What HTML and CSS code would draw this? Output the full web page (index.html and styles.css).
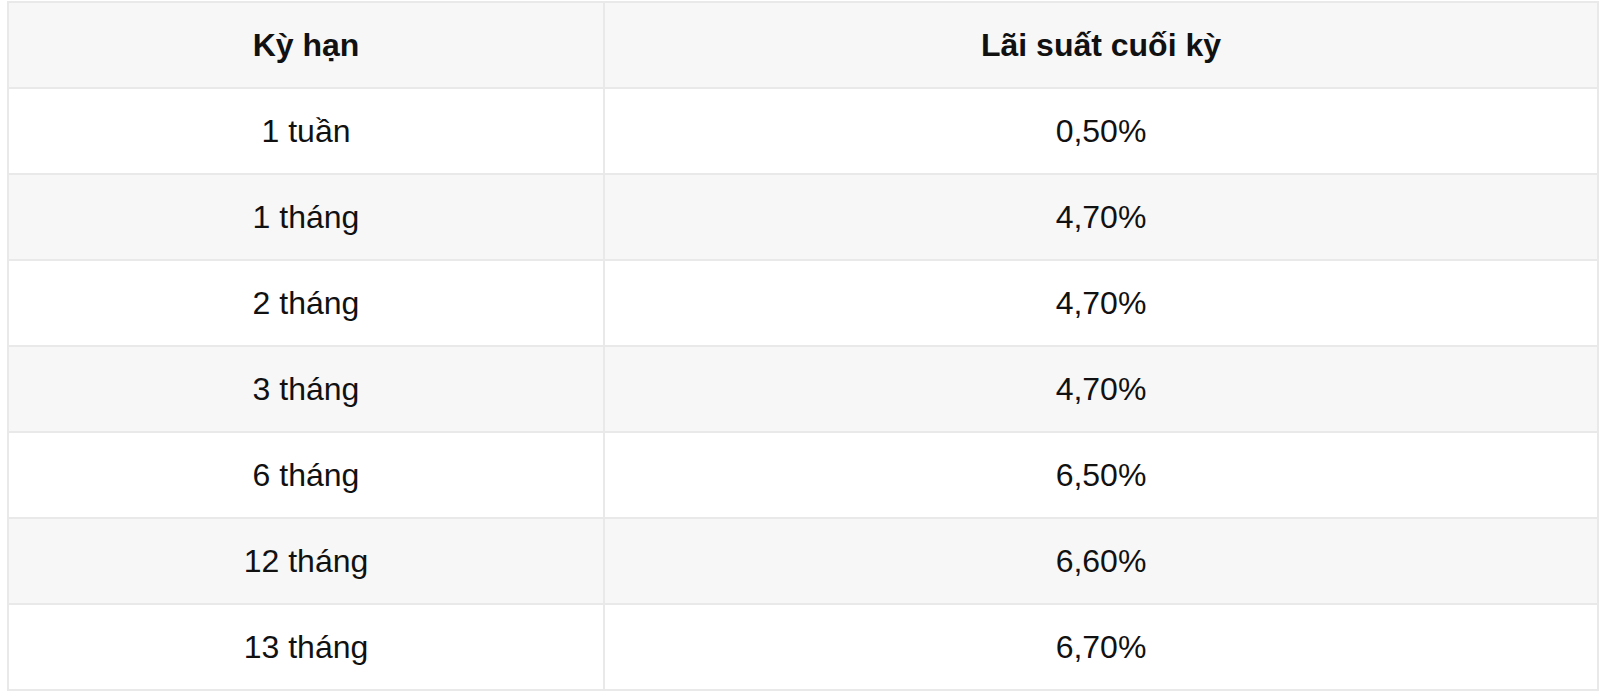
FILE: index.html
```html
<!DOCTYPE html>
<html lang="vi">
<head>
<meta charset="utf-8">
<title>Lãi suất</title>
<link rel="stylesheet" href="styles.css">
</head>
<body>
<table class="rates">
  <colgroup>
    <col class="col-term">
    <col class="col-rate">
  </colgroup>
  <thead>
    <tr><th>Kỳ hạn</th><th>Lãi suất cuối kỳ</th></tr>
  </thead>
  <tbody>
    <tr><td>1 tuần</td><td>0,50%</td></tr>
    <tr><td>1 tháng</td><td>4,70%</td></tr>
    <tr><td>2 tháng</td><td>4,70%</td></tr>
    <tr><td>3 tháng</td><td>4,70%</td></tr>
    <tr><td>6 tháng</td><td>6,50%</td></tr>
    <tr><td>12 tháng</td><td>6,60%</td></tr>
    <tr><td>13 tháng</td><td>6,70%</td></tr>
  </tbody>
</table>
</body>
</html>
```

FILE: styles.css
```css
html, body {
  margin: 0;
  padding: 0;
  background: #ffffff;
}
body {
  padding: 1px 0 0 7px;
  font-family: "Liberation Sans", Arial, Helvetica, sans-serif;
  color: #111111;
}
.rates {
  border-collapse: collapse;
  width: 1592px;
  table-layout: fixed;
  font-size: 32px;
}
.col-term { width: 596px; }
.rates th,
.rates td {
  border: 2px solid #e9e9e9;
  height: 84px;
  padding: 0;
  text-align: center;
  vertical-align: middle;
}
.rates th {
  font-weight: bold;
  background: #f7f7f7;
}
.rates tbody tr:nth-child(even) td {
  background: #f7f7f7;
}
.rates tbody tr:nth-child(odd) td {
  background: #ffffff;
}
```
